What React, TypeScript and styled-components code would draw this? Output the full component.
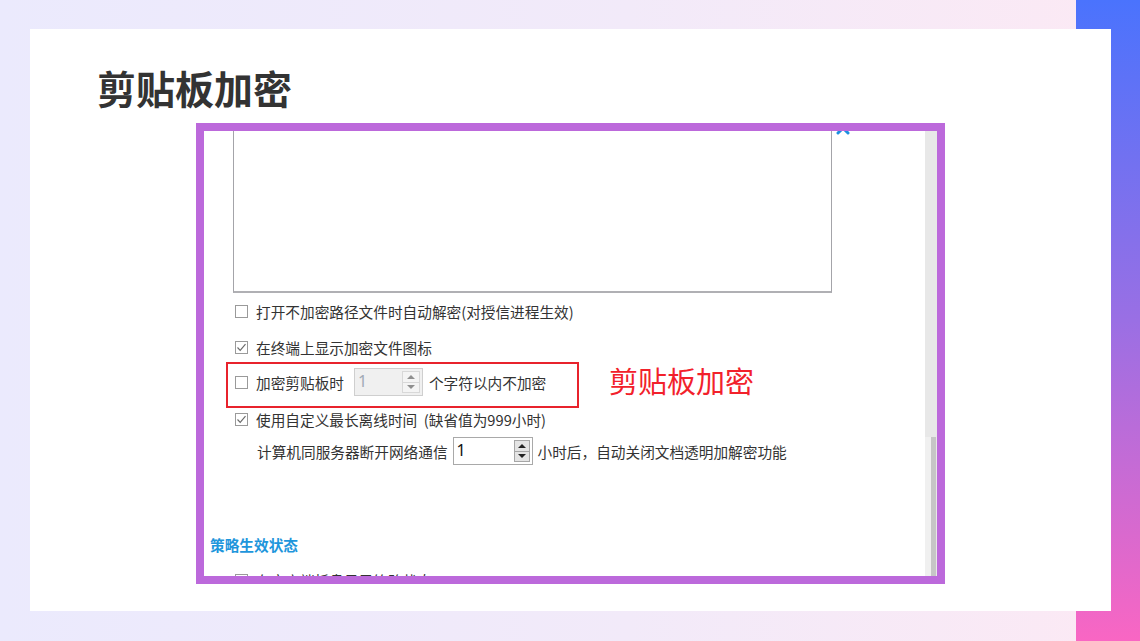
import React from 'react'
import styled, {createGlobalStyle} from 'styled-components'

const GlobalStyle = createGlobalStyle`
    html, body {
        margin: 0;
        padding: 0;
    }
    body {
        font-family: "Noto Sans CJK SC", "Noto Sans", sans-serif;
    }
`

const Page = styled.div`
    width: 1140px;
    height: 641px;
    box-sizing: border-box;
    padding: 29px 29px 30px 30px;
    overflow: hidden;
    background:
        linear-gradient(180deg, #4a73fd 0%, #9a6fe4 50%, #f966c3 100%) right top / 64px 100% no-repeat,
        linear-gradient(90deg, #ebeafd 0%, #f2eaf9 55%, #fce9f4 100%);
`

const Card = styled.div`
    height: 100%;
    box-sizing: border-box;
    background: #ffffff;
    padding: 35px 0 0 67px;
`

const Title = styled.h1`
    margin: 0;
    font-size: 39px;
    line-height: 46px;
    font-weight: 700;
    color: #333333;
`

const Frame = styled.div`
    margin: 13px 0 0 99px;
    width: 749px;
    height: 461px;
    box-sizing: border-box;
    border: 8px solid #bc69db;
    background: #ffffff;
    display: flex;
`

const Screen = styled.div`
    flex: 1;
    overflow: hidden;
    display: flex;
    flex-direction: column;
    font-size: 14.67px;
    color: #333333;
`

const ScrollBar = styled.div`
    width: 12px;
    display: flex;
    flex-direction: column;
    background: #e8e8e8;
`

const ScrollThumb = styled.div`
    margin-top: 306px;
    flex: 1;
    background: linear-gradient(90deg, #f0f0f0 0 6px, #c6c6c6 6px 11px, #e8e8e8 11px);
`

const TopRow = styled.div`
    display: flex;
    align-items: flex-start;
    height: 162px;
    padding-left: 29px;
    flex-shrink: 0;
`

const TextBox = styled.div`
    width: 599px;
    height: 164px;
    margin-top: -2px;
    box-sizing: border-box;
    border: 1px solid #a4a4a9;
    border-bottom-width: 2px;
    border-bottom-color: #b0b0b4;
    background: #ffffff;
`

const CloseMark = styled.svg`
    margin: -10px 0 0 4px;
    flex-shrink: 0;
`

const Option = styled.div<{$h: number; $top?: number}>`
    display: flex;
    align-items: center;
    gap: 8px;
    height: ${p => p.$h}px;
    margin-top: ${p => p.$top ?? 0}px;
    padding-left: 31px;
    flex-shrink: 0;
    white-space: pre;
`

const Box = styled.span`
    width: 13px;
    height: 13px;
    box-sizing: border-box;
    border: 1px solid #9a9a9a;
    background: #ffffff;
    display: flex;
    align-items: center;
    justify-content: center;
    flex-shrink: 0;
`

const HighlightRow = styled.div`
    display: flex;
    align-items: flex-start;
    margin-top: -3px;
    flex-shrink: 0;
`

const Highlight = styled.div`
    margin-left: 22px;
    width: 353px;
    height: 46px;
    box-sizing: border-box;
    border: 2px solid #e8232c;
    padding: 0 0 6px 7px;
    display: flex;
    align-items: center;
    white-space: nowrap;
`

const Annotation = styled.div`
    margin: 0 0 0 30px;
    font-size: 29px;
    line-height: 36px;
    color: #f2212b;
    white-space: nowrap;
`

const Label = styled.span<{$gapLeft?: number; $gapRight?: number}>`
    margin-left: ${p => p.$gapLeft ?? 0}px;
    margin-right: ${p => p.$gapRight ?? 0}px;
`

const TimeRow = styled.div`
    display: flex;
    align-items: center;
    height: 28px;
    margin-top: 7px;
    padding-left: 53px;
    white-space: nowrap;
    flex-shrink: 0;
`

const Spin = styled.div<{$w: number; $disabled?: boolean}>`
    width: ${p => p.$w}px;
    height: 28px;
    box-sizing: border-box;
    border: 1px solid ${p => p.$disabled ? '#cfcfcf' : '#a9a9a9'};
    background: ${p => p.$disabled ? '#f0f0f0' : '#ffffff'};
    display: flex;
    align-items: center;
    justify-content: space-between;
    padding: 2px 2px 2px 3px;
    flex-shrink: 0;
`

const SpinValue = styled.span<{$disabled?: boolean}>`
    font-family: "Noto Sans", "DejaVu Sans", sans-serif;
    font-size: 16px;
    line-height: 20px;
    color: ${p => p.$disabled ? '#a0aab6' : '#111111'};
    align-self: flex-start;
`

const SpinButtons = styled.div`
    display: flex;
    flex-direction: column;
    height: 100%;
`

const SpinButton = styled.div<{$disabled?: boolean; $w: number}>`
    width: ${p => p.$w}px;
    flex: 1;
    box-sizing: border-box;
    border: 1px solid ${p => p.$disabled ? '#d8d8d8' : '#a6a6a6'};
    background: ${p => p.$disabled ? '#f4f4f4' : '#e4e4e4'};
    display: flex;
    align-items: center;
    justify-content: center;
    & + & {
        margin-top: -1px;
    }
`

const Arrow = styled.span<{$down?: boolean; $disabled?: boolean}>`
    width: 0;
    height: 0;
    border-left: 4px solid transparent;
    border-right: 4px solid transparent;
    ${p => p.$down
        ? `border-top: 4px solid ${p.$disabled ? '#8f8f8f' : '#222'};`
        : `border-bottom: 4px solid ${p.$disabled ? '#8f8f8f' : '#222'};`}
`

const Section = styled.div`
    margin-top: 70px;
    padding-left: 6px;
    font-size: 14.67px;
    line-height: 20px;
    font-weight: 700;
    color: #1e96dc;
    flex-shrink: 0;
`

function CheckBox({checked}: { checked?: boolean }) {
    return (
        <Box>
            {checked && (
                <svg width="11" height="11" viewBox="0 0 11 11">
                    <polyline points="1.5,5.5 4.2,8.3 9.5,2.2" fill="none" stroke="#6b6b6b" strokeWidth="1.2"/>
                </svg>
            )}
        </Box>
    )
}

function Spinner({width, buttonWidth, disabled}: { width: number; buttonWidth: number; disabled?: boolean }) {
    return (
        <Spin $w={width} $disabled={disabled}>
            <SpinValue $disabled={disabled}>1</SpinValue>
            <SpinButtons>
                <SpinButton $w={buttonWidth} $disabled={disabled}><Arrow $disabled={disabled}/></SpinButton>
                <SpinButton $w={buttonWidth} $disabled={disabled}><Arrow $down $disabled={disabled}/></SpinButton>
            </SpinButtons>
        </Spin>
    )
}

export default function App() {
    return (
        <>
            <GlobalStyle/>
            <Page>
                <Card>
                    <Title>剪贴板加密</Title>
                    <Frame>
                        <Screen>
                            <TopRow>
                                <TextBox/>
                                <CloseMark width="14" height="14" viewBox="0 0 14 14">
                                    <path d="M2 2 L12 12 M12 2 L2 12" stroke="#1c8fe0" strokeWidth="3" strokeLinecap="round"/>
                                </CloseMark>
                            </TopRow>
                            <Option $h={36}>
                                <CheckBox/>
                                <span>打开不加密路径文件时自动解密(对授信进程生效)</span>
                            </Option>
                            <Option $h={36}>
                                <CheckBox checked/>
                                <span>在终端上显示加密文件图标</span>
                            </Option>
                            <HighlightRow>
                                <Highlight>
                                    <CheckBox/>
                                    <Label $gapLeft={8} $gapRight={10}>加密剪贴板时</Label>
                                    <Spinner width={69} buttonWidth={18} disabled/>
                                    <Label $gapLeft={6}>个字符以内不加密</Label>
                                </Highlight>
                                <Annotation>剪贴板加密</Annotation>
                            </HighlightRow>
                            <Option $h={22}>
                                <CheckBox checked/>
                                <span>使用自定义最长离线时间  (缺省值为999小时)</span>
                            </Option>
                            <TimeRow>
                                <Label $gapRight={5}>计算机同服务器断开网络通信</Label>
                                <Spinner width={80} buttonWidth={16}/>
                                <Label $gapLeft={5}>小时后，自动关闭文档透明加解密功能</Label>
                            </TimeRow>
                            <Section>策略生效状态</Section>
                            <Option $h={36} $top={7}>
                                <CheckBox/>
                                <span>在客户端托盘显示策略状态</span>
                            </Option>
                        </Screen>
                        <ScrollBar>
                            <ScrollThumb/>
                        </ScrollBar>
                    </Frame>
                </Card>
            </Page>
        </>
    )
}
